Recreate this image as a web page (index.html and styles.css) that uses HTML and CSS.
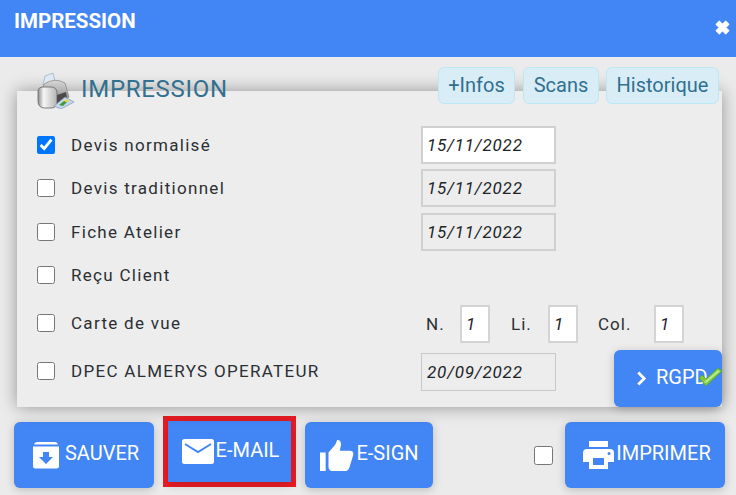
FILE: index.html
```html
<!DOCTYPE html>
<html lang="en">
<head>
<meta charset="UTF-8">
<meta name="viewport" content="width=device-width, initial-scale=1.0">
<title>Impression</title>
<link rel="stylesheet" href="styles.css">
</head>
<body>

<header class="modal-header">
  <span class="modal-title">IMPRESSION</span>
  <svg class="close-icon" viewBox="0 0 16 16"><path d="M2 5l3-3 3 3 3-3 3 3-3 3 3 3-3 3-3-3-3 3-3-3 3-3z" fill="#fff" stroke="#fff" stroke-linejoin="round"/></svg>
</header>

<div class="top-row">
  <div class="heading">
    <svg class="printer-logo" viewBox="0 0 38 36">
      <defs>
        <linearGradient id="body-grad" x1="0" y1="0" x2="0" y2="1">
          <stop offset="0" stop-color="#d6d6d6"/>
          <stop offset="0.6" stop-color="#a2a2a2"/>
          <stop offset="1" stop-color="#7c7c7c"/>
        </linearGradient>
        <linearGradient id="front-grad" x1="0" y1="0" x2="1" y2="0">
          <stop offset="0" stop-color="#8c8c8c"/>
          <stop offset="0.3" stop-color="#f6f6f6"/>
          <stop offset="1" stop-color="#b4b4b4"/>
        </linearGradient>
      </defs>
      <path d="M6 12L8 3l8-3 2 9z" fill="#dfe9f4" stroke="#9db4cc" stroke-width=".8"/>
      <path d="M7 11Q18 4 28 10L32 24 20 33 4 20z" fill="url(#body-grad)" stroke="#777" stroke-width=".6"/>
      <path d="M1 19Q1 14 6 14H14Q20 14 20 20V29Q20 35 14 35H8Q1 35 1 28z" fill="url(#front-grad)" stroke="#666" stroke-width=".8"/>
      <path d="M20 22L29 19 30 25 20 31z" fill="#4a4a4a"/>
      <path d="M17 33L28 24 37 29 24 36z" fill="#c5d6ec" stroke="#7f97b8" stroke-width=".7"/>
      <path d="M22 32L27 28 30 29 26 33z" fill="#3f9a3a"/>
      <path d="M27 28L29 26 33 28 30 29z" fill="#e8d83a"/>
    </svg>
    <span>IMPRESSION</span>
  </div>
  <div class="tabs">
    <a class="tab tab-infos">+Infos</a>
    <a class="tab tab-scans">Scans</a>
    <a class="tab tab-hist">Historique</a>
  </div>
</div>

<section class="panel">
  <div class="row">
    <input type="checkbox" class="check" checked>
    <label class="row-label">Devis normalisé</label>
    <input type="text" class="date-input date-active" value="15/11/2022">
  </div>
  <div class="row">
    <input type="checkbox" class="check">
    <label class="row-label">Devis traditionnel</label>
    <input type="text" class="date-input" value="15/11/2022">
  </div>
  <div class="row">
    <input type="checkbox" class="check">
    <label class="row-label">Fiche Atelier</label>
    <input type="text" class="date-input" value="15/11/2022">
  </div>
  <div class="row">
    <input type="checkbox" class="check">
    <label class="row-label">Reçu Client</label>
  </div>
  <div class="row row-tall row-copies">
    <input type="checkbox" class="check">
    <label class="row-label">Carte de vue</label>
    <div class="copies">
      <span class="copy-n">N.</span>
      <input type="text" class="num-input" value="1">
      <span class="copy-li">Li.</span>
      <input type="text" class="num-input" value="1">
      <span class="copy-col">Col.</span>
      <input type="text" class="num-input" value="1">
    </div>
  </div>
  <div class="row row-tall">
    <input type="checkbox" class="check">
    <label class="row-label">DPEC ALMERYS OPERATEUR</label>
    <input type="text" class="date-input date-thin" value="20/09/2022">
  </div>

  <button class="btn btn-rgpd">
    <svg class="chevron" viewBox="0 0 10 14"><path d="M2 1.500l5.500 5.500-5.500 5.500" fill="none" stroke="#fff" stroke-width="2.6"/></svg>
    <span>RGPD</span>
    <svg class="rgpd-check" viewBox="0 0 24 18">
      <path d="M1 10l3-3 4 4L20 0l4 3L8 18z" fill="#7ccb3c" stroke="#4fa02a" stroke-width=".7"/>
      <path d="M6 14L20 2l2 1.500L8 15z" fill="#b5e88a"/>
    </svg>
  </button>
</section>

<footer class="actions">
  <button class="btn btn-save">
    <svg class="icon icon-save" viewBox="0 0 28 28"><path fill-rule="evenodd" fill="#fff" d="M5 1h18a3 3 0 0 1 3 2.500H2A3 3 0 0 1 5 1zM1 5.500h26V25a2.500 2.500 0 0 1-2.500 2.500h-21A2.500 2.500 0 0 1 1 25zM11 11v5H7l7 7 7-7h-4v-5z"/></svg>
    <span class="btn-text">SAUVER</span>
  </button>
  <div class="highlight">
    <button class="btn btn-mail">
      <svg class="icon icon-mail" viewBox="0 0 32 25"><path fill="#fff" d="M2.500 0h27A2.500 2.500 0 0 1 32 2.500v20a2.500 2.500 0 0 1-2.500 2.500h-27A2.500 2.500 0 0 1 0 22.500v-20A2.500 2.500 0 0 1 2.500 0z"/><path d="M3 5l13 8 13-8" fill="none" stroke="#4285f4" stroke-width="2"/></svg>
      <span class="btn-text">E-MAIL</span>
    </button>
  </div>
  <button class="btn btn-sign">
    <svg class="icon icon-sign" viewBox="0 0 36 32" preserveAspectRatio="none"><path fill="#fff" d="M0 13h6v19H0zM9 13l7-8c1-2 2-4 2-5 3 0 5 2 4 6l-1 5h11c3 0 4 3 3 5l-4 13c-1 2-2 3-4 3H13c-2 0-4-2-4-4z"/></svg>
    <span class="btn-text">E-SIGN</span>
  </button>
  <div class="actions-right">
    <input type="checkbox" class="check check-print">
    <button class="btn btn-print">
      <svg class="icon icon-print" viewBox="0 0 31 28"><path fill-rule="evenodd" fill="#fff" d="M6 0h19v6H6zM4 8h23a4 4 0 0 1 4 4v9h-6v7H6v-7H0v-9a4 4 0 0 1 4-4zM10 17v7h11v-7zM26 11a1.500 1.500 0 1 0 0 3 1.500 1.500 0 0 0 0-3z"/></svg>
      <span class="btn-text">IMPRIMER</span>
    </button>
  </div>
</footer>

</body>
</html>
```

FILE: styles.css
```css
* {
  box-sizing: border-box;
}
body {
  margin: 0;
  height: 495px;
  overflow: hidden;
  background: #ebebeb;
  font-family: Roboto, "Liberation Sans", sans-serif;
  color: #212529;
}

.modal-header {
  height: 57px;
  background: #4285f4;
  padding: 10px 5px 0 14px;
  display: flex;
  justify-content: space-between;
  color: #fff;
}
.modal-title {
  font-size: 20.5px;
  font-weight: 700;
  line-height: 22px;
}
.close-icon {
  width: 17px;
  height: 17px;
  margin-top: 9px;
}

.top-row {
  position: relative;
  z-index: 2;
  display: flex;
  justify-content: space-between;
  height: 37px;
  padding: 10px 17px 0 37px;
  margin-bottom: -3px;
}
.heading {
  display: flex;
  align-items: flex-start;
  color: #31708f;
  font-size: 24px;
  line-height: 28px;
  letter-spacing: 0.7px;
}
.heading span {
  margin-left: 6px;
  margin-top: 8px;
}
.printer-logo {
  width: 38px;
  height: 36px;
  margin-top: 6px;
}
.tabs {
  display: flex;
  gap: 7px;
  height: 37px;
}
.tab {
  background: #d9edf7;
  border: 1px solid #bce8f1;
  border-radius: 6px;
  color: #31708f;
  font-size: 20px;
  height: 37px;
  line-height: 34px;
  text-align: center;
}
.tab-infos { width: 77px; margin-right: 1px; }
.tab-scans { width: 76px; }
.tab-hist { width: 113px; }

.panel {
  position: relative;
  height: 316px;
  margin: 0 14px 0 17px;
  padding: 32px 0 0 20px;
  background: #ededed;
  box-shadow: 0 0 16px rgba(0, 0, 0, 0.38);
}
.row {
  display: flex;
  align-items: center;
  height: 43.5px;
}
.row-tall {
  height: 48px;
}
.row-tall .check,
.row-tall .row-label {
  margin-bottom: 2px;
}
.row-copies {
  margin-top: 2.5px;
}
.check {
  width: 18px;
  height: 18px;
  margin: 0;
  flex: none;
}
.row-label {
  width: 350px;
  margin-left: 16px;
  font-size: 17px;
  letter-spacing: 1.3px;
  color: #2b2f33;
}
.date-input {
  width: 135px;
  height: 38px;
  padding: 0 4px;
  border: 2px solid #d0d0d0;
  background: #ededed;
  font: italic 17px Roboto, "Liberation Sans", sans-serif;
  letter-spacing: 0.8px;
  color: #212529;
}
.date-active {
  background: #fff;
}
.date-thin {
  border: 1px solid #c8c8c8;
  padding: 0 5px;
}
.copies {
  display: flex;
  align-items: center;
  margin-left: 5px;
  font-size: 17px;
  letter-spacing: 1px;
  color: #2b2f33;
}
.copy-n { width: 34px; }
.copy-li { width: 37px; margin-left: 21px; }
.copy-col { width: 56px; margin-left: 20px; }
.num-input {
  width: 30px;
  height: 38px;
  padding: 0 4px;
  border: 2px solid #d4d4d4;
  background: #fff;
  font: italic 17px Roboto, "Liberation Sans", sans-serif;
  color: #212529;
}

.btn {
  display: flex;
  align-items: center;
  justify-content: center;
  height: 66px;
  padding: 0;
  border: none;
  border-radius: 6px;
  background: #4285f4;
  color: #fff;
  font: 400 20px Roboto, "Liberation Sans", sans-serif;
  box-shadow: 0 2px 10px rgba(0, 0, 0, 0.2);
}
.btn-text {
  margin-bottom: 4px;
}
.btn-rgpd {
  position: absolute;
  right: 0;
  bottom: 0;
  width: 108px;
  height: 57px;
  justify-content: flex-start;
  padding: 0 0 3px 22px;
}
.chevron {
  width: 11px;
  height: 15px;
  margin-right: 9px;
  margin-top: 3px;
}
.rgpd-check {
  position: absolute;
  right: 0;
  top: 18px;
  width: 24px;
  height: 18px;
}

.actions {
  display: flex;
  align-items: flex-start;
  padding: 15px 11px 0 14px;
}
.highlight {
  margin: -6px 9px 0 9px;
  border: 5px solid #ed1c24;
  height: 71px;
  width: 133px;
}
.highlight .btn {
  width: 123px;
  height: 61px;
  padding-left: 2px;
  border-radius: 0;
}
.btn-save { width: 140px; padding-left: 3px; }
.btn-sign { width: 128px; padding-left: 1px; }
.btn-print { width: 160px; padding-left: 4px; }
.actions-right {
  display: flex;
  align-items: center;
  margin-left: auto;
}
.check-print {
  width: 19px;
  height: 19px;
  margin-right: 12px;
}
.icon {
  flex: none;
  margin-right: 2px;
}
.icon-save { width: 28px; height: 28px; margin-right: 5px; }
.icon-mail { width: 32px; height: 25px; }
.icon-sign { width: 34px; height: 31px; }
.icon-print { width: 31px; height: 28px; }
```
